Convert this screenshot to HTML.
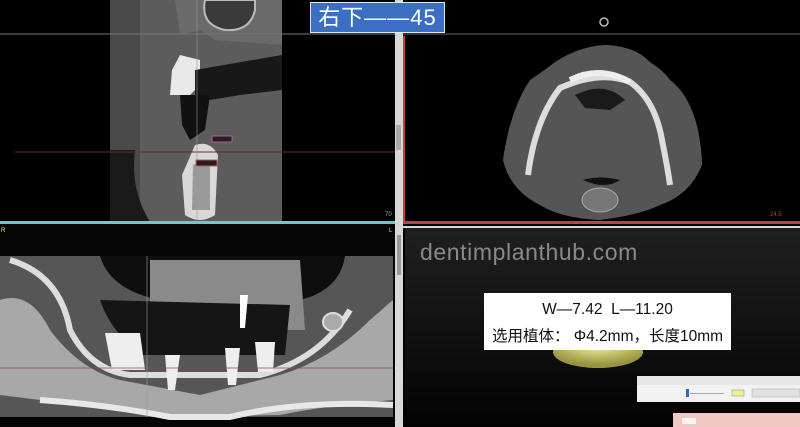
<!DOCTYPE html>
<html><head><meta charset="utf-8"><style>
html,body{margin:0;padding:0;background:#000;width:800px;height:427px;overflow:hidden;font-family:"Liberation Sans","Noto Sans CJK SC",sans-serif}
.a{position:absolute}
</style></head><body>
<svg class="a" style="left:0;top:0" width="800" height="427" viewBox="0 0 800 427">
<defs>
<linearGradient id="br" x1="0" y1="0" x2="0" y2="1"><stop offset="0" stop-color="#202020"/><stop offset="1" stop-color="#030303"/></linearGradient>
<radialGradient id="yl" cx="0.5" cy="0.3" r="0.6"><stop offset="0" stop-color="#f4f0a0"/><stop offset="1" stop-color="#9a9440"/></radialGradient>
</defs>
<rect width="800" height="427" fill="#000"/>
<rect x="110" y="0" width="172" height="222" fill="#5c5c5c"/>
<rect x="110" y="0" width="30" height="222" fill="#4a4a4a"/>
<path d="M135 150 Q130 190 150 222 L110 222 L110 150Z" fill="#1a1a1a"/>
<path d="M175 0 L180 35 L200 30 L215 40 L282 45 L282 0Z" fill="#6a6a6a"/>
<path d="M205 0 Q200 25 225 30 Q250 32 255 10 L255 0Z" fill="#3a3a3a" stroke="#bbb" stroke-width="2"/>
<path d="M180 55 L200 60 L200 85 L190 95 L170 95 L172 70Z" fill="#e8e8e8"/>
<path d="M195 70 L282 55 L282 90 L240 95 L210 100 L195 100Z" fill="#181818"/>
<path d="M180 95 L210 95 L205 130 L190 140 L182 125Z" fill="#111"/>
<path d="M195 145 Q210 140 218 155 L215 215 Q200 225 185 215 L182 175Z" fill="#d8d8d8"/>
<path d="M193 165 L210 160 L210 210 L192 210Z" fill="#9a9a9a"/>
<line x1="0" y1="34" x2="400" y2="34" stroke="#777" stroke-width="1"/>
<line x1="15" y1="152" x2="395" y2="152" stroke="#6a2a2a" stroke-width="1"/>
<line x1="197" y1="0" x2="197" y2="222" stroke="#998" stroke-width="0.6"/>
<rect x="212" y="136" width="20" height="6" fill="#2a1a2a" stroke="#a68"/>
<rect x="196" y="160" width="21" height="6" fill="#2a1a1a" stroke="#a66"/>
<rect x="0" y="221" width="396" height="3" fill="#5fd0d0"/>
<rect x="395" y="0" width="8" height="227" fill="#d8d8d8"/>
<rect x="396" y="125" width="5" height="25" fill="#aaa"/>
<line x1="403" y1="34" x2="800" y2="34" stroke="#666" stroke-width="1"/>
<path d="M503 160 Q510 110 530 80 Q545 70 555 62 Q580 46 605 45 Q635 46 650 62 Q665 72 670 80 Q690 95 698 130 Q702 150 702 165 Q690 195 660 205 Q640 215 600 220 Q560 218 540 205 Q510 190 503 160Z" fill="#555"/>
<path d="M528 175 Q535 120 560 88 Q600 70 630 82 Q655 100 662 140 Q668 170 670 185" fill="none" stroke="#ddd" stroke-width="6"/>
<path d="M570 80 Q600 65 630 82" fill="none" stroke="#eee" stroke-width="6"/>
<path d="M575 95 Q605 80 625 100 L610 110 L585 108Z" fill="#1a1a1a"/>
<path d="M583 180 Q600 175 620 180 Q605 190 583 180Z" fill="#111"/>
<ellipse cx="600" cy="200" rx="18" ry="12" fill="#777" stroke="#aaa"/>
<circle cx="604" cy="22" r="4" fill="none" stroke="#bbb" stroke-width="1.5"/>
<rect x="403" y="36" width="2" height="186" fill="#c04040"/>
<rect x="403" y="221" width="397" height="3" fill="#c04040"/>
<rect x="0" y="224" width="395" height="203" fill="#050505"/>
<rect x="0" y="256" width="393" height="161" fill="#565656"/>
<path d="M100 256 Q110 290 160 300 L300 300 Q340 290 345 256Z" fill="#0e0e0e"/>
<path d="M150 260 L300 260 L305 330 L250 330 L200 320 L150 325Z" fill="#8a8a8a"/>
<path d="M100 300 L290 305 L285 355 L140 355 Q110 330 100 300Z" fill="#151515"/>
<path d="M0 300 Q30 290 50 330 Q80 370 120 380 L200 395 L280 375 Q330 360 370 320 L393 300 L393 400 Q330 405 280 415 L180 417 Q100 410 40 400 L0 395Z" fill="#a8a8a8"/>
<path d="M10 260 Q60 275 70 330 Q90 370 130 375 L260 375 Q320 360 350 310" fill="none" stroke="#ddd" stroke-width="6"/>
<path d="M40 400 Q110 405 170 417 L230 417 Q300 400 393 405" fill="none" stroke="#e8e8e8" stroke-width="6"/>
<path d="M105 333 L140 333 L145 370 L112 370Z" fill="#eee"/>
<path d="M255 342 L275 342 L273 372 L258 372Z" fill="#eee"/>
<path d="M165 355 L180 355 L175 390 L168 390Z" fill="#eee"/>
<path d="M225 348 L240 348 L236 385 L228 385Z" fill="#eee"/>
<path d="M240 295 L248 295 L245 328 L240 328Z" fill="#fff"/>
<ellipse cx="333" cy="322" rx="10" ry="9" fill="#aaa" stroke="#ddd" stroke-width="2"/>
<line x1="0" y1="368" x2="393" y2="368" stroke="#8a4a4a" stroke-width="0.7"/>
<line x1="147" y1="256" x2="147" y2="417" stroke="#8aa" stroke-width="0.6"/>
<rect x="395" y="227" width="8" height="200" fill="#d8d8d8"/>
<rect x="397" y="235" width="4" height="40" fill="#999"/>
<rect x="405" y="226" width="395" height="201" fill="url(#br)"/>
<rect x="403" y="226" width="397" height="2" fill="#d8d8d0"/>
<ellipse cx="598" cy="352" rx="45" ry="16" fill="url(#yl)"/>
<rect x="637" y="376" width="163" height="26" fill="#f2f2f2"/>
<rect x="637" y="376" width="163" height="9" fill="#e6e6e6"/>
<rect x="690" y="393" width="34" height="1" fill="#aaa"/>
<rect x="686" y="389" width="3" height="8" fill="#2a6fc0"/>
<rect x="732" y="390" width="12" height="6" fill="#f0f090" stroke="#888" stroke-width="0.5"/>
<rect x="752" y="389" width="48" height="8" fill="#e0e0e0" stroke="#aaa" stroke-width="0.5"/>
<rect x="673" y="413" width="127" height="14" fill="#f0c8c4"/>
<rect x="682" y="418" width="14" height="6" fill="#fff" opacity="0.8"/>
</svg>
<div class="a" style="left:310px;top:2px;width:133px;height:29px;background:#3b6fc6;border:1px solid #dfe8f5;color:#fff;font-size:22px;line-height:29px;text-align:center;letter-spacing:1px">右下——45</div>
<div class="a" style="left:420px;top:239px;color:#8a8a8a;font-size:23px;letter-spacing:0.6px">dentimplanthub.com</div>
<div class="a" style="left:484px;top:293px;width:247px;height:57px;background:#fff;color:#111;text-align:center;font-size:15.5px;line-height:27px;padding-top:3px;box-sizing:border-box">W—7.42&nbsp; L—11.20<br>选用植体： Φ4.2mm，长度10mm</div>
<div class="a" style="left:770px;top:212px;color:#e03030;font-size:6px">24.5</div>
<div class="a" style="left:385px;top:212px;color:#5fd0d0;font-size:6px">70</div>
<div class="a" style="left:1px;top:228px;color:#ee4;font-size:6px">R</div>
<div class="a" style="left:389px;top:228px;color:#ee4;font-size:6px">L</div>
</body></html>
